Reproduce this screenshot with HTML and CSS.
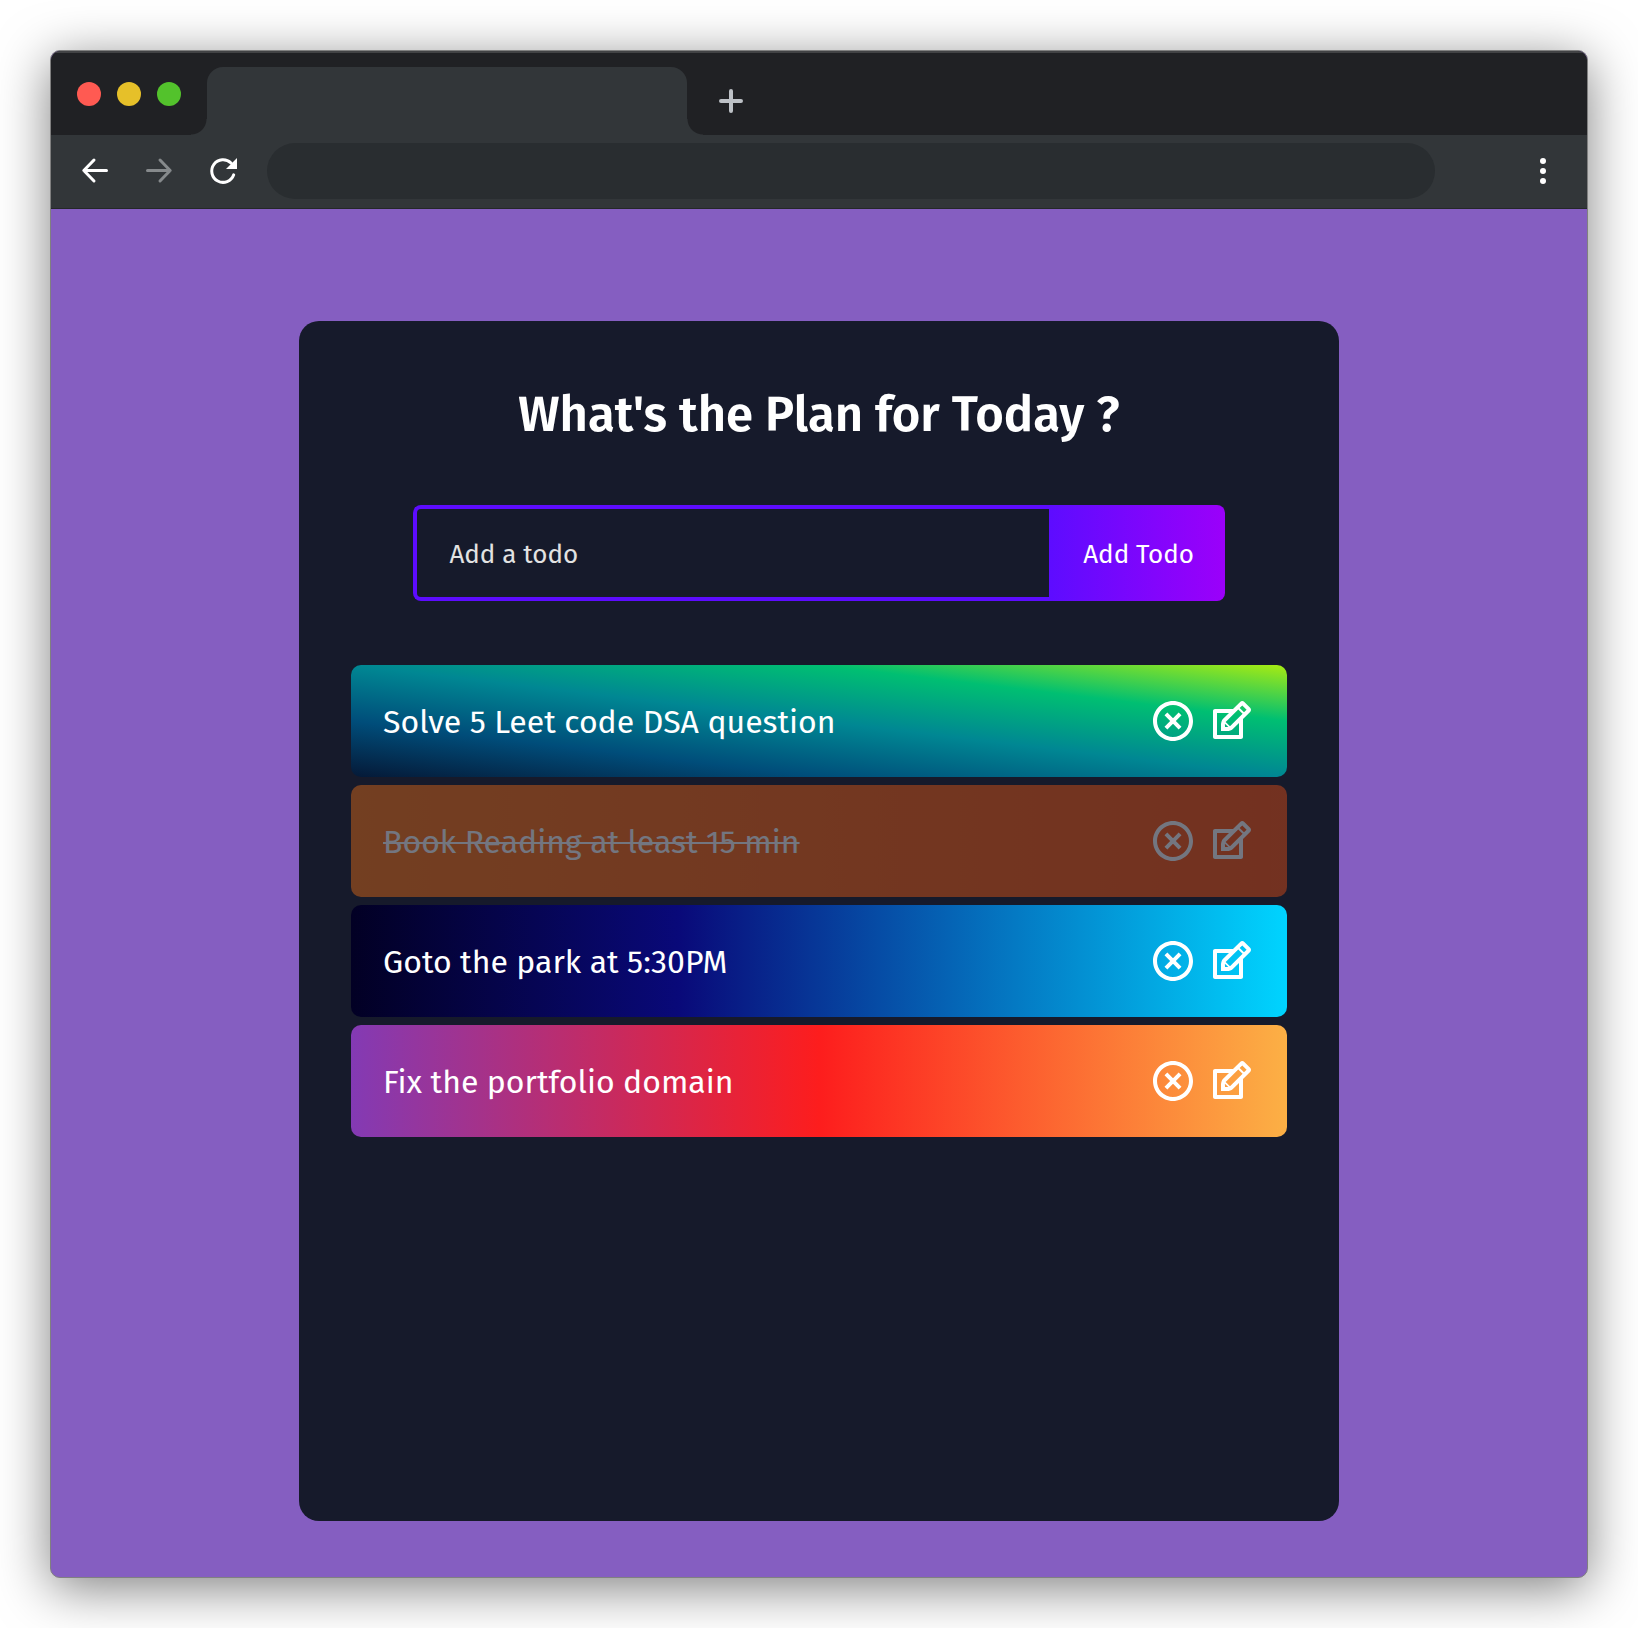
FILE: index.html
```html
<!DOCTYPE html>
<html lang="en">
<head>
<meta charset="utf-8">
<meta name="viewport" content="width=device-width, initial-scale=1">
<title>Todo App</title>
<link rel="stylesheet" href="styles.css">
</head>
<body>
<svg class="sprite" aria-hidden="true">
  <symbol id="icon-close" viewBox="0 0 24 24">
    <path d="M12 22C6.477 22 2 17.523 2 12S6.477 2 12 2s10 4.477 10 10-4.477 10-10 10zm0-2a8 8 0 1 0 0-16 8 8 0 0 0 0 16zm0-9.414l2.828-2.829 1.415 1.415L13.414 12l2.829 2.828-1.415 1.415L12 13.414l-2.828 2.829-1.415-1.415L10.586 12 7.757 9.172l1.415-1.415L12 10.586z"/>
  </symbol>
  <symbol id="icon-edit" viewBox="0 0 24 24">
    <path d="M21.561 5.318l-2.879-2.879c-.293-.293-.677-.439-1.061-.439-.385 0-.768.146-1.061.439l-3.56 3.561h-9c-.552 0-1 .447-1 1v13c0 .553.448 1 1 1h13c.552 0 1-.447 1-1v-9l3.561-3.561c.293-.293.439-.677.439-1.061s-.146-.767-.439-1.061zm-10.061 9.354l-2.172-2.172 6.293-6.293 2.172 2.172-6.293 6.293zm-2.561-1.339l1.756 1.728-1.695-.061-.061-1.667zm7.061 5.667h-11v-11h6l-3.18 3.18c-.293.293-.478.812-.629 1.289-.16.5-.191 1.056-.191 1.47v3.061h3.061c.414 0 1.108-.1 1.571-.29.464-.19.896-.347 1.188-.64l3.18-3.07v6zm2.5-11.328l-2.172-2.172 1.293-1.293 2.171 2.172-1.292 1.293z"/>
  </symbol>
</svg>
<div class="browser">
  <header class="tab-bar">
    <div class="lights">
      <span class="light light-close"></span>
      <span class="light light-minimize"></span>
      <span class="light light-zoom"></span>
    </div>
    <div class="tab"></div>
    <button class="new-tab" type="button" aria-label="New tab">
      <svg viewBox="0 0 24 24" width="24" height="24"><path d="M12 2v20M2 12h20"/></svg>
    </button>
  </header>
  <nav class="toolbar" aria-label="Browser">
    <div class="nav-buttons">
      <button class="tool" type="button" aria-label="Back">
        <svg viewBox="0 0 32 32"><path d="M27.500 15.500H5M15 5 4.800 15.500 15 26"/></svg>
      </button>
      <button class="tool tool-off" type="button" aria-label="Forward">
        <svg viewBox="0 0 32 32"><path d="M4.500 15.500H27M17 5 27.200 15.500 17 26"/></svg>
      </button>
      <button class="tool" type="button" aria-label="Reload">
        <svg viewBox="0 0 32 32"><path d="M26.700 19.800A11.300 11.300 0 1 1 24 8"/><path class="solid" d="M30 3v11H19z"/></svg>
      </button>
    </div>
    <input class="address" type="text" aria-label="Address">
    <button class="tool" type="button" aria-label="Menu">
      <svg viewBox="0 0 32 32"><g class="solid"><circle cx="16" cy="6" r="3"/><circle cx="16" cy="16" r="3"/><circle cx="16" cy="26" r="3"/></g></svg>
    </button>
  </nav>
  <main class="page">
    <section class="todo-app">
      <h1 class="title">What's the Plan for Today ?</h1>
      <form class="todo-form">
        <input class="todo-input" type="text" placeholder="Add a todo" aria-label="Add a todo">
        <button class="todo-button" type="button">Add Todo</button>
      </form>
      <ul class="todo-list">
        <li class="todo-row row-lime">
          <span class="todo-text">Solve 5 Leet code DSA question</span>
          <button class="icon-button" type="button" aria-label="Delete"><svg><use href="#icon-close"/></svg></button>
          <button class="icon-button" type="button" aria-label="Edit"><svg><use href="#icon-edit"/></svg></button>
        </li>
        <li class="todo-row row-orange complete">
          <span class="todo-text">Book Reading at least 15 min</span>
          <button class="icon-button" type="button" aria-label="Delete"><svg><use href="#icon-close"/></svg></button>
          <button class="icon-button" type="button" aria-label="Edit"><svg><use href="#icon-edit"/></svg></button>
        </li>
        <li class="todo-row row-blue">
          <span class="todo-text">Goto the park at 5:30PM</span>
          <button class="icon-button" type="button" aria-label="Delete"><svg><use href="#icon-close"/></svg></button>
          <button class="icon-button" type="button" aria-label="Edit"><svg><use href="#icon-edit"/></svg></button>
        </li>
        <li class="todo-row row-sunset">
          <span class="todo-text">Fix the portfolio domain</span>
          <button class="icon-button" type="button" aria-label="Delete"><svg><use href="#icon-close"/></svg></button>
          <button class="icon-button" type="button" aria-label="Edit"><svg><use href="#icon-edit"/></svg></button>
        </li>
      </ul>
    </section>
  </main>
</div>
</body>
</html>
```
FILE: styles.css
```css
:root {
  --frame: #202124;
  --toolbar: #323639;
  --field: #292d30;
  --page: #855ec1;
  --card: #161a2b;
}

* {
  box-sizing: border-box;
}

body {
  margin: 0;
  padding: 50px;
  background: #fff;
  font-family: "Trebuchet MS", "Fira Sans", Lato, sans-serif;
}

button {
  padding: 0;
  border: 0;
  background: none;
  color: inherit;
  font: inherit;
  cursor: pointer;
}

svg {
  display: block;
}

.sprite {
  position: absolute;
  width: 0;
  height: 0;
}

/* Browser window */

.browser {
  overflow: hidden;
  border: 1px solid #808080;
  border-radius: 10px;
  background: var(--page);
  box-shadow: 0 10px 52px rgba(0, 0, 0, 0.5);
}

.tab-bar {
  display: flex;
  align-items: flex-end;
  height: 84px;
  padding-left: 26px;
  border-top: 2px solid #424345;
  background: var(--frame);
}

.lights {
  display: flex;
  align-self: center;
  gap: 16px;
  margin-right: 26px;
}

.light {
  width: 24px;
  height: 24px;
  border-radius: 50%;
}

.light-close {
  background: #ff5a52;
}

.light-minimize {
  background: #e6c029;
}

.light-zoom {
  background: #53c22c;
}

.tab {
  position: relative;
  width: 480px;
  height: 68px;
  border-radius: 16px 16px 0 0;
  background: var(--toolbar);
}

.tab::before,
.tab::after {
  content: "";
  position: absolute;
  bottom: 0;
  width: 16px;
  height: 16px;
}

.tab::before {
  right: 100%;
  background: radial-gradient(circle at 0 0, transparent 15px, var(--toolbar) 16px);
}

.tab::after {
  left: 100%;
  background: radial-gradient(circle at 100% 0, transparent 15px, var(--toolbar) 16px);
}

.new-tab {
  display: flex;
  align-items: center;
  height: 68px;
  margin-left: 32px;
}

.new-tab path {
  stroke: #bdc1c6;
  stroke-width: 4;
  stroke-linecap: round;
}

.toolbar {
  display: flex;
  align-items: center;
  padding: 8px 28px 9px;
  border-bottom: 1px solid #25282a;
  background: var(--toolbar);
}

.nav-buttons {
  display: flex;
  gap: 32px;
}

.tool {
  width: 32px;
  height: 32px;
}

.tool path {
  fill: none;
  stroke: #fff;
  stroke-width: 3;
  stroke-linecap: round;
  stroke-linejoin: round;
}

.tool-off path {
  stroke: #868a8c;
}

.tool .solid {
  fill: #fff;
  stroke: none;
}

.address {
  flex: 1;
  min-width: 0;
  height: 56px;
  margin: 0 92px 0 28px;
  padding: 0 28px;
  border: 0;
  border-radius: 28px;
  background: var(--field);
  color: #fff;
  font-size: 26px;
}

/* Todo app */

.page {
  padding: 112px 0 56px;
}

.todo-app {
  max-width: 1040px;
  min-height: 1200px;
  margin: 0 auto;
  padding: 64px 0;
  border-radius: 20px;
  background: var(--card);
  color: #fff;
}

.title {
  margin: 0 0 60px;
  font-size: 49px;
  font-weight: 600;
  line-height: 60px;
  text-align: center;
}

.todo-form {
  display: flex;
  width: 78%;
  margin: 0 auto 64px;
  font-size: 26px;
}

.todo-input {
  flex: 1;
  min-width: 0;
  height: 96px;
  padding: 2px 32px 0;
  border: 4px solid #5d0cff;
  border-right: 0;
  border-radius: 8px 0 0 8px;
  outline: none;
  background: transparent;
  color: #fff;
  font: inherit;
}

.todo-input::placeholder {
  color: #e2e2e2;
  opacity: 1;
}

.todo-button {
  width: 176px;
  padding: 2px 0 0 4px;
  border-radius: 0 8px 8px 0;
  background: linear-gradient(90deg, #5d0cff 0%, #9b00fa 100%);
}

.todo-list {
  display: flex;
  flex-direction: column;
  gap: 8px;
  width: 90%;
  margin: 0 auto;
  padding: 0;
  list-style: none;
}

.todo-row {
  display: flex;
  align-items: center;
  gap: 10px;
  padding: 32px;
  border-radius: 10px;
  font-size: 32px;
  line-height: 46px;
}

.todo-text {
  flex: 1;
  padding-top: 2px;
}

.icon-button svg {
  width: 48px;
  height: 48px;
  fill: currentColor;
}

.row-lime {
  background: linear-gradient(to right top, #051937, #004d7a, #008793, #00bf72, #a8eb12);
}

.row-orange {
  background: linear-gradient(90deg, #ff7614 0%, #ff5411 100%);
}

.row-blue {
  background: linear-gradient(90deg, #020024 0%, #090979 35%, #00d4ff 100%);
}

.row-sunset {
  background: linear-gradient(90deg, #833ab4 0%, #fd1d1d 50%, #fcb045 100%);
}

.complete {
  opacity: 0.4;
}

.complete .todo-text {
  text-decoration: line-through 2px;
}
```
